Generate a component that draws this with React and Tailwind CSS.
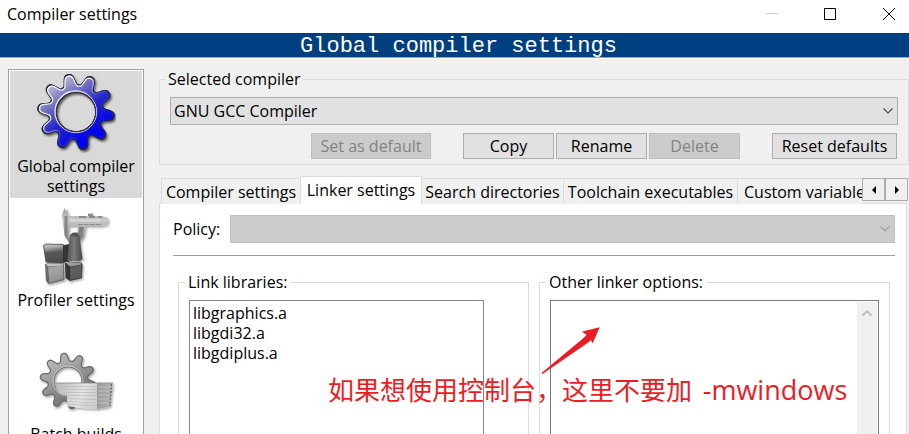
import React from "react";

function gearPath(cx, cy, inner, outer, hole, startDeg) {
  const points = [];
  const steps = 240;
  const start = (startDeg * Math.PI) / 180;
  for (let i = 0; i < steps; i++) {
    const a = (i / steps) * Math.PI * 2;
    const wave = Math.tanh(1.5 * Math.cos(10 * a) - 0.1);
    const s = (wave + 0.92) / 1.81;
    const r = inner + (outer - inner) * s;
    const x = cx + r * Math.sin(a + start);
    const y = cy - r * Math.cos(a + start);
    points.push(`${x.toFixed(2)} ${y.toFixed(2)}`);
  }
  return (
    `M${points.join("L")}Z` +
    `M${cx - hole} ${cy}a${hole} ${hole} 0 1 0 ${hole * 2} 0a${hole} ${hole} 0 1 0 ${-hole * 2} 0Z`
  );
}

const BLUE_GEAR = gearPath(40, 39, 27, 38, 20, -12);
const GREY_GEAR = gearPath(32, 40, 20, 28, 14, -9);

function GearIcon() {
  return (
    <svg className="h-20 w-20" viewBox="0 0 80 80" aria-hidden="true">
      <defs>
        <linearGradient id="blueFill" x1="0.2" y1="0.1" x2="0.7" y2="0.85">
          <stop offset="0" stopColor="#b8b8d8" />
          <stop offset="0.3" stopColor="#6c6cc0" />
          <stop offset="0.6" stopColor="#2222cc" />
          <stop offset="1" stopColor="#0000f0" />
        </linearGradient>
        <linearGradient id="blueEdge" x1="0.1" y1="0.1" x2="0.75" y2="0.75">
          <stop offset="0" stopColor="#ffffff" />
          <stop offset="0.4" stopColor="#f0f0ff" />
          <stop offset="0.65" stopColor="#4444e0" />
          <stop offset="1" stopColor="#1010d0" />
        </linearGradient>
        <filter id="gearShadow" x="-10%" y="-10%" width="130%" height="130%">
          <feDropShadow dx="1.5" dy="2" stdDeviation="1.2" floodColor="#000" floodOpacity="0.6" />
        </filter>
      </defs>
      <g fillRule="evenodd" strokeLinejoin="round">
        <path d={BLUE_GEAR} fill="#202030" stroke="#222" strokeWidth="1.6" filter="url(#gearShadow)" />
        <path d={BLUE_GEAR} fill="url(#blueFill)" stroke="#26263a" strokeWidth="1.6" />
        <path d={gearPath(40, 39, 26, 36.6, 21, -12)} fill="url(#blueFill)" stroke="url(#blueEdge)" strokeWidth="1.3" />
        <circle cx="40" cy="39" r="20.6" fill="none" stroke="#d8d8f0" strokeWidth="1" />
        <circle cx="40" cy="39" r="19.8" fill="none" stroke="#333" strokeWidth="0.9" />
      </g>
    </svg>
  );
}

function CaliperIcon() {
  return (
    <svg className="h-20 w-20" viewBox="0 0 80 80" aria-hidden="true">
      <defs>
        <linearGradient id="cubeDark" x1="0" y1="0" x2="0.15" y2="1">
          <stop offset="0" stopColor="#c8c8c8" />
          <stop offset="0.2" stopColor="#b0b0b0" />
          <stop offset="0.5" stopColor="#585858" />
          <stop offset="1" stopColor="#4c4c4c" />
        </linearGradient>
        <linearGradient id="cone" x1="0" y1="0" x2="1" y2="0">
          <stop offset="0" stopColor="#505050" />
          <stop offset="0.45" stopColor="#7c7c7c" />
          <stop offset="1" stopColor="#444" />
        </linearGradient>
        <linearGradient id="steel" x1="0" y1="0" x2="0" y2="1">
          <stop offset="0" stopColor="#a0a0a0" />
          <stop offset="0.35" stopColor="#c8c8c8" />
          <stop offset="1" stopColor="#8c8c8c" />
        </linearGradient>
        <linearGradient id="cubeLight" x1="0" y1="0" x2="0.4" y2="1">
          <stop offset="0" stopColor="#8a8a8a" />
          <stop offset="0.3" stopColor="#a6a6a6" />
          <stop offset="1" stopColor="#909090" />
        </linearGradient>
        <filter id="softShadow" x="-10%" y="-10%" width="130%" height="130%">
          <feDropShadow dx="1.2" dy="1.6" stdDeviation="1" floodColor="#000" floodOpacity="0.35" />
        </filter>
      </defs>
      <g filter="url(#softShadow)">
        <path d="M26 8L28.500 1 30.500 4.500 32 2.500V9H52V6.500H57V9H66L72 11V17L66 19H50L48 30 44 35 41 33 42 19H33V28L35 32 33 35 29 30Z" fill="url(#steel)" />
        <path d="M28.500 9H31.500V32L28.500 28Z" fill="#858585" />
        <path d="M43 20H48L46 31 43 33Z" fill="#808080" />
        <path d="M43 10H50M52 8H57M53 10H59M62 10H66" stroke="#5c5c5c" strokeWidth="1.200" />
        <path d="M34 13.500H64" stroke="#dadada" strokeWidth="2" />
        <path d="M42 17.500H66" stroke="#8c8c8c" strokeWidth="1.200" strokeDasharray="5 1" />
        <path d="M28 38L34 37 33 55H28Z" fill="#303030" />
        <path d="M34 28L37 25.500H41.500L43.500 29 46.500 52 44 54 31 54.500 32 43Z" fill="url(#cone)" />
        <path d="M34.500 28L37 26H41.500L43.500 29 38 30Z" fill="#555" />
        <path d="M7.500 38.500L10 37 27 37.500 29.500 39 29 55 26 56 10 55Z" fill="url(#cubeDark)" stroke="#474747" strokeWidth="0.800" />
        <path d="M27 38L29.500 39 29 55 27 56Z" fill="#303030" />
        <path d="M9 57L13 56 28 56.500 28.500 73 12.500 77 10 74Z" fill="#6a6a6a" />
        <path d="M12 60L27 58.500V72L13.500 75.500Z" fill="url(#cubeLight)" />
        <path d="M10 57.500L13 56.500 27.500 57 26 58.500 12 59.500Z" fill="#c2c2c2" />
        <path d="M29 56L44 55 46.500 57 46 71 34 74 29.500 71Z" fill="#343434" />
        <path d="M34 60L45.500 58V70L34.500 73Z" fill="#5c5c5c" />
        <path d="M30 56L44 55.500 45.500 57.500 34 59.500Z" fill="#9c9c9c" />
      </g>
    </svg>
  );
}

function BatchIcon() {
  return (
    <svg className="h-20 w-20" viewBox="0 0 80 80" aria-hidden="true">
      <defs>
        <linearGradient id="greyFill" x1="0" y1="0" x2="0.6" y2="1">
          <stop offset="0" stopColor="#c8c8c8" />
          <stop offset="0.5" stopColor="#989898" />
          <stop offset="1" stopColor="#666666" />
        </linearGradient>
        <linearGradient id="pageFront" x1="0" y1="0" x2="1" y2="0.3">
          <stop offset="0" stopColor="#b8b8b8" />
          <stop offset="0.7" stopColor="#e4e4e4" />
          <stop offset="1" stopColor="#d0d0d0" />
        </linearGradient>
        <linearGradient id="pageSide" x1="0" y1="0" x2="1" y2="0">
          <stop offset="0" stopColor="#9a9a9a" />
          <stop offset="1" stopColor="#b4b4b4" />
        </linearGradient>
      </defs>
      <g filter="url(#softShadow)">
        <path d={GREY_GEAR} fill="url(#greyFill)" fillRule="evenodd" stroke="#6a6a6a" strokeWidth="1.2" />
        <circle cx="32" cy="40" r="15" fill="none" stroke="#d0d0d0" strokeWidth="0.800" />
        <path d="M19 42H61V68L45 67 31 65V54L24 53 20 47Z" fill="url(#pageFront)" />
        <path d="M61 42H77L76 45 77 47 75 50 76 52 74 55 75 57 74 60 75 62 73 66 61 68Z" fill="url(#pageSide)" />
        <path d="M21 45.500H61M22 48.500H61M24 51.500H61M31 54.500H61M31 57.500L61 58.500M31 60.500L61 62M31 63L61 65" stroke="#bdbdbd" strokeWidth="0.800" />
        <path d="M62 46H75M62 50H74M62 54H74M62 58H74M62 62H73" stroke="#c4c4c4" strokeWidth="0.800" />
        <path d="M75.500 43L74 65" stroke="#6c6c6c" strokeWidth="1.500" strokeDasharray="2 1.500" />
        <path d="M18 42H77" stroke="#8a8a8a" strokeWidth="0.800" />
      </g>
    </svg>
  );
}

function Chevron({ className }) {
  return (
    <svg className={className} viewBox="0 0 10 6" fill="none" stroke="currentColor" strokeWidth="1.1" aria-hidden="true">
      <path d="M0.500 0.500L5 5L9.500 0.500" />
    </svg>
  );
}

function CategoryItem({ icon, label, selected }) {
  return (
    <li>
      <button
        type="button"
        aria-pressed={selected}
        className={`flex h-[127px] w-full flex-col items-center px-1 pt-0.5 leading-5 ${selected ? "bg-[#d9d9d9]" : "bg-white"}`}
      >
        {icon}
        <span className="mt-[3px]">{label}</span>
      </button>
    </li>
  );
}

function PushButton({ children, className, disabled }) {
  const tone = disabled ? "border-[#bfbfbf] bg-[#cccccc] text-[#838383]" : "border-[#adadad] bg-[#e1e1e1]";
  return (
    <button type="button" disabled={disabled} className={`h-[26px] border leading-6 whitespace-nowrap ${tone} ${className}`}>
      {children}
    </button>
  );
}

function Tab({ label, active, className }) {
  const look = active
    ? "relative z-10 -ml-px h-7 border-x bg-white pb-0.5"
    : "h-[26px] border-r bg-[#f0f0f0]";
  return (
    <button
      type="button"
      role="tab"
      aria-selected={active}
      className={`shrink-0 border-t border-[#dcdcdc] whitespace-nowrap ${look} ${className}`}
    >
      {label}
    </button>
  );
}

function TitleBar() {
  return (
    <header className="flex h-[33px] shrink-0 items-start bg-white">
      <h1 className="flex-1 pt-1 pl-[7px] leading-5">Compiler settings</h1>
      <button type="button" disabled aria-label="Minimize" className="flex h-7 w-[58px] items-center justify-center text-[#cccccc]">
        <svg className="h-3 w-3" viewBox="0 0 12 12" stroke="currentColor"><path d="M0 5.500H12" /></svg>
      </button>
      <button type="button" aria-label="Maximize" className="flex h-7 w-[58px] items-center justify-center">
        <svg className="h-3 w-3" viewBox="0 0 12 12" fill="none" stroke="currentColor"><path d="M0.500 0.500H11.500V11.500H0.500Z" /></svg>
      </button>
      <button type="button" aria-label="Close" className="ml-2.5 flex h-7 w-10 items-center justify-center">
        <svg className="h-3 w-3" viewBox="0 0 12 12" stroke="currentColor"><path d="M0 0L12 12M12 0L0 12" /></svg>
      </button>
    </header>
  );
}

function CompilerGroup() {
  return (
    <fieldset className="border border-[#dcdcdc] pr-[10px] pb-[5px] pl-[10px]">
      <legend className="-ml-1 px-0.5 leading-5">Selected compiler</legend>
      <div className="relative mt-2">
        <select aria-label="Selected compiler" className="h-7 w-full appearance-none border border-[#adadad] bg-[#e1e1e1] pl-[3px]">
          <option>GNU GCC Compiler</option>
        </select>
        <Chevron className="pointer-events-none absolute top-[11px] right-[5px] h-1.5 w-2.5 text-[#444444]" />
      </div>
      <div className="mt-2 flex justify-end pr-px">
        <PushButton disabled className="w-[120px]">Set as default</PushButton>
        <PushButton className="ml-8 w-[91px]">Copy</PushButton>
        <PushButton className="ml-0.5 w-[91px]">Rename</PushButton>
        <PushButton disabled className="ml-0.5 w-[91px]">Delete</PushButton>
        <PushButton className="ml-8 w-[125px]">Reset defaults</PushButton>
      </div>
    </fieldset>
  );
}

function TabStrip() {
  return (
    <div className="flex items-start pr-px">
      <div role="tablist" className="relative z-10 -mb-px flex min-w-0 flex-1 items-end overflow-hidden pl-0.5">
        <Tab label="Compiler settings" className="w-[140px] border-l" />
        <Tab label="Linker settings" active className="w-[122px]" />
        <Tab label="Search directories" className="w-[142px]" />
        <Tab label="Toolchain executables" className="w-[174px]" />
        <Tab label="Custom variables" className="w-[140px] pl-1.5 text-left" />
      </div>
      <div className="mt-0.5 flex">
        <button type="button" aria-label="Scroll tabs left" className="flex h-[23px] w-[23px] items-center justify-center border border-[#adadad] bg-[#f0f0f0]">
          <svg className="h-2 w-1" viewBox="0 0 4 8"><path d="M4 0V8L0 4Z" /></svg>
        </button>
        <button type="button" aria-label="Scroll tabs right" className="flex h-[23px] w-[23px] items-center justify-center border border-[#adadad] bg-[#f0f0f0]">
          <svg className="h-2 w-1" viewBox="0 0 4 8"><path d="M0 0V8L4 4Z" /></svg>
        </button>
      </div>
    </div>
  );
}

function LinkerPanel() {
  return (
    <div role="tabpanel" className="mr-0.5 border border-[#dcdcdc] bg-white pt-[11px] pr-[11px] pl-[13px]">
      <div className="flex items-center">
        <label htmlFor="policy" className="w-[57px]">Policy:</label>
        <div className="relative flex-1">
          <select id="policy" disabled className="block h-7 w-full appearance-none border border-[#bfbfbf] bg-[#cccccc] opacity-100" />
          <Chevron className="pointer-events-none absolute top-[11px] right-[5px] h-1.5 w-2.5 text-[#a0a0a0]" />
        </div>
      </div>
      <hr className="mt-3 border-[#a0a0a0]" />
      <div className="mt-4 grid grid-cols-2 gap-[10px] px-[5px]">
        <fieldset className="min-w-0 border border-[#dcdcdc] pr-[44px] pb-3 pl-[10px]">
          <legend className="-ml-1 px-[3px] leading-5">Link libraries:</legend>
          <select multiple aria-label="Link libraries" className="mt-2 block h-60 w-full overflow-hidden border border-[#828790] bg-white py-px">
            <option className="h-5 px-[3px] py-0 leading-5">libgraphics.a</option>
            <option className="h-5 px-[3px] py-0 leading-5">libgdi32.a</option>
            <option className="h-5 px-[3px] py-0 leading-5">libgdiplus.a</option>
          </select>
        </fieldset>
        <fieldset className="min-w-0 border border-[#dcdcdc] px-[10px] pb-3">
          <legend className="-ml-1 px-[3px] leading-5">Other linker options:</legend>
          <div className="mt-2 flex h-60 border border-[#7a7a7a] bg-white p-px">
            <textarea aria-label="Other linker options" className="min-w-0 flex-1 resize-none overflow-hidden bg-white px-1" />
            <div className="flex w-5 justify-center bg-[#f0f0f0] pt-2">
              <svg className="h-1.5 w-2.5 text-[#bfbfbf]" viewBox="0 0 10 6" fill="none" stroke="currentColor" strokeWidth="2" aria-hidden="true">
                <path d="M0.500 5.500L5 1.200L9.500 5.500" />
              </svg>
            </div>
          </div>
        </fieldset>
      </div>
    </div>
  );
}

function Annotation() {
  return (
    <div className="pointer-events-none absolute top-[324px] left-[328px] z-20 text-[#ed1c24]">
      <svg className="ml-[212px] h-[50px] w-[62px]" viewBox="0 0 62 50" fill="currentColor" aria-hidden="true">
        <path d="M59.700 3.200L42 7.500L46.500 11L43.500 14L1.500 49L2.500 50L47.500 19L51 16L52.500 19.500Z" />
      </svg>
      <p className="text-[26px] leading-8 whitespace-nowrap">
        如果想使用控制台，这里不要加 <span className="ml-1 text-[27px]">-mwindows</span>
      </p>
    </div>
  );
}

export default function App() {
  return (
    <div className="relative flex h-screen flex-col overflow-hidden bg-[#f0f0f0] font-['Open_Sans','Noto_Sans_CJK_SC',sans-serif] text-[16px] text-black">
      <TitleBar />
      <div className="shrink-0 border-b border-white">
        <h2 className="h-[25px] border-b border-[#a0a0a0] bg-[#004080] pl-2 text-center font-['Liberation_Mono',monospace] text-[22px] leading-7 text-white">
          Global compiler settings
        </h2>
      </div>
      <main className="flex shrink-0 pt-[10px] pl-2">
        <nav aria-label="Categories" className="w-[136px] shrink-0 border border-[#a0a0a0] bg-white p-px">
          <ul className="flex flex-col gap-[7px]">
            <CategoryItem icon={<GearIcon />} label="Global compiler settings" selected />
            <CategoryItem icon={<CaliperIcon />} label="Profiler settings" />
            <CategoryItem icon={<BatchIcon />} label="Batch builds" />
          </ul>
        </nav>
        <div className="ml-[15px] flex min-w-0 flex-1 flex-col">
          <CompilerGroup />
          <div className="mt-[11px]">
            <TabStrip />
            <LinkerPanel />
          </div>
        </div>
      </main>
      <Annotation />
    </div>
  );
}
